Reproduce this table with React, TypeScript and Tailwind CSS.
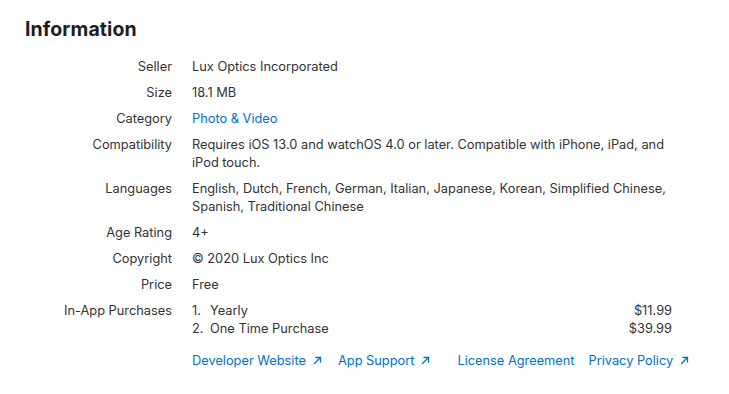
import React from 'react';

// ─── Data ────────────────────────────────────────────────────────────────────
const rows: { label: string; value: React.ReactNode }[] = [
  { label: 'Seller', value: 'Lux Optics Incorporated' },
  { label: 'Size', value: '18.1 MB' },
  { label: 'Category', value: <a className="text-[#0070c9]">Photo &amp; Video</a> },
  {
    label: 'Compatibility',
    value: 'Requires iOS 13.0 and watchOS 4.0 or later. Compatible with iPhone, iPad, and iPod touch.',
  },
  {
    label: 'Languages',
    value: 'English, Dutch, French, German, Italian, Japanese, Korean, Simplified Chinese, Spanish, Traditional Chinese',
  },
  { label: 'Age Rating', value: '4+' },
  { label: 'Copyright', value: '© 2020 Lux Optics Inc' },
  { label: 'Price', value: 'Free' },
];

const purchases = [
  { name: 'Yearly', price: '$11.99' },
  { name: 'One Time Purchase', price: '$39.99' },
];

function Arrow() {
  return (
    <svg width="9" height="9" viewBox="0 0 9 9" className="inline-block ml-[7px] -mt-[2px]" fill="none" stroke="currentColor" strokeWidth="1.3" strokeLinecap="round">
      <path d="M1.5 7.5L7.5 1.5" />
      <path d="M3 1.5H7.5V6" />
    </svg>
  );
}

export default function App() {
  return (
    <div
      className="w-[729px] h-[394px] bg-white pl-[25px] pt-[16px] text-[#333] antialiased overflow-hidden"
      style={{ fontFamily: 'Inter, "Liberation Sans", sans-serif' }}
    >
      {/* Header */}
      <h2 className="text-[19.5px] leading-[26px] font-bold text-[#1d1d1f] tracking-[0.1px]">Information</h2>

      {/* Details */}
      <dl className="grid grid-cols-[147px_480px] gap-x-5 gap-y-2 mt-[16px] text-[12.8px] leading-[18px]">
        {rows.map((r) => (
          <React.Fragment key={r.label}>
            <dt className="text-right">{r.label}</dt>
            <dd>{r.value}</dd>
          </React.Fragment>
        ))}
        <dt className="text-right">In-App Purchases</dt>
        <dd>
          <ol>
            {purchases.map((p, i) => (
              <li key={p.name} className="flex justify-between">
                <span>
                  <span className="inline-block w-[18px]">{i + 1}.</span>
                  {p.name}
                </span>
                <span>{p.price}</span>
              </li>
            ))}
          </ol>
        </dd>
        <dt />
        <dd className="flex whitespace-nowrap text-[#0070c9] mt-[6px]">
          <a className="shrink-0 mr-[16px]">Developer Website<Arrow /></a>
          <a className="shrink-0">App Support<Arrow /></a>
          <a className="shrink-0 ml-[27px] mr-[14px]">License Agreement</a>
          <a className="shrink-0">Privacy Policy<Arrow /></a>
        </dd>
      </dl>
    </div>
  );
}
